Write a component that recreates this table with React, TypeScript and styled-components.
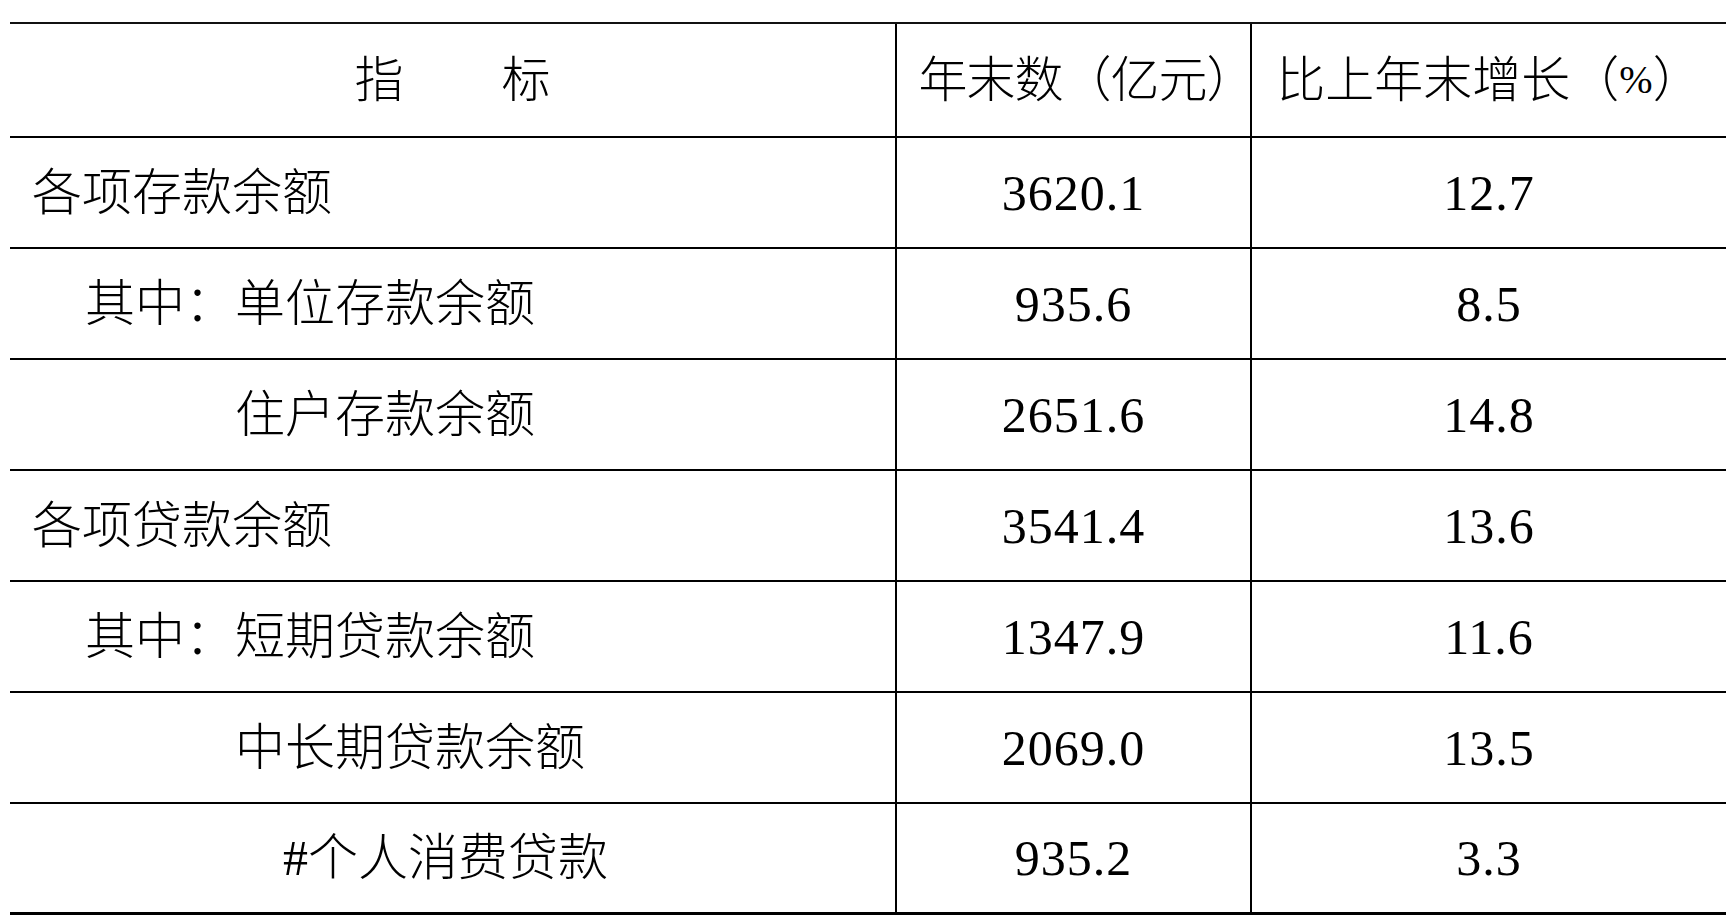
import React from 'react';
import styled, { createGlobalStyle } from 'styled-components';

const GlobalStyle = createGlobalStyle`
  html, body {
    margin: 0;
    padding: 0;
    background: #ffffff;
  }
  body {
    font-family: "Liberation Serif", "Noto Sans CJK SC", serif;
    color: #000000;
  }
`;

const Page = styled.div`
  padding: 22px 0 0 10px;
  width: 1726px;
  box-sizing: border-box;
`;

const Grid = styled.div`
  display: grid;
  grid-template-columns: 885px 355px 476px;
  border-top: 2px solid #111;
  width: 1716px;
`;

const Cell = styled.div<{ $divider?: boolean; $last?: boolean; $head?: boolean }>`
  box-sizing: border-box;
  display: flex;
  align-items: center;
  height: ${(p) => (p.$head ? 114 : 111)}px;
  border-bottom: ${(p) => (p.$last ? 3 : 2)}px solid #000;
  border-left: ${(p) => (p.$divider ? '2px solid #000' : 'none')};
  font-size: 49px;
  line-height: 1;
  white-space: nowrap;
  text-spacing-trim: space-all;
`;

const HeadCell = styled(Cell)<{ $shift?: number }>`
  justify-content: center;
  padding-left: ${(p) => p.$shift ?? 0}px;
  font-weight: 300;
  letter-spacing: ${(p) => (p.$shift ? '-1px' : '0')};
`;

const LabelCell = styled(Cell)<{ $indent: number }>`
  justify-content: flex-start;
  padding-left: ${(p) => 22 + p.$indent}px;
  font-size: 50px;
  font-weight: 300;
`;

const NumCell = styled(Cell)`
  justify-content: center;
  font-size: 50px;
  letter-spacing: 1px;
`;

const Pct = styled.span`
  font-family: "Liberation Serif", serif;
  font-size: 40px;
  letter-spacing: 0;
`;

type Row = { label: string; indent: number; amount: string; growth: string };

const rows: Row[] = [
  { label: '各项存款余额', indent: 0, amount: '3620.1', growth: '12.7' },
  { label: '其中：单位存款余额', indent: 53, amount: '935.6', growth: '8.5' },
  { label: '住户存款余额', indent: 203, amount: '2651.6', growth: '14.8' },
  { label: '各项贷款余额', indent: 0, amount: '3541.4', growth: '13.6' },
  { label: '其中：短期贷款余额', indent: 53, amount: '1347.9', growth: '11.6' },
  { label: '中长期贷款余额', indent: 203, amount: '2069.0', growth: '13.5' },
  { label: '#个人消费贷款', indent: 251, amount: '935.2', growth: '3.3' },
];

const App: React.FC = () => {
  return (
    <>
      <GlobalStyle />
      <Page>
        <Grid>
          <HeadCell $head>指　　标</HeadCell>
          <HeadCell $head $divider $shift={26}>年末数（亿元）</HeadCell>
          <HeadCell $head $divider>
            比上年末增长（<Pct>%</Pct>）
          </HeadCell>
          {rows.map((r, i) => {
            const last = i === rows.length - 1;
            return (
              <React.Fragment key={r.label}>
                <LabelCell $indent={r.indent} $last={last}>{r.label}</LabelCell>
                <NumCell $divider $last={last}>{r.amount}</NumCell>
                <NumCell $divider $last={last}>{r.growth}</NumCell>
              </React.Fragment>
            );
          })}
        </Grid>
      </Page>
    </>
  );
};

export default App;
